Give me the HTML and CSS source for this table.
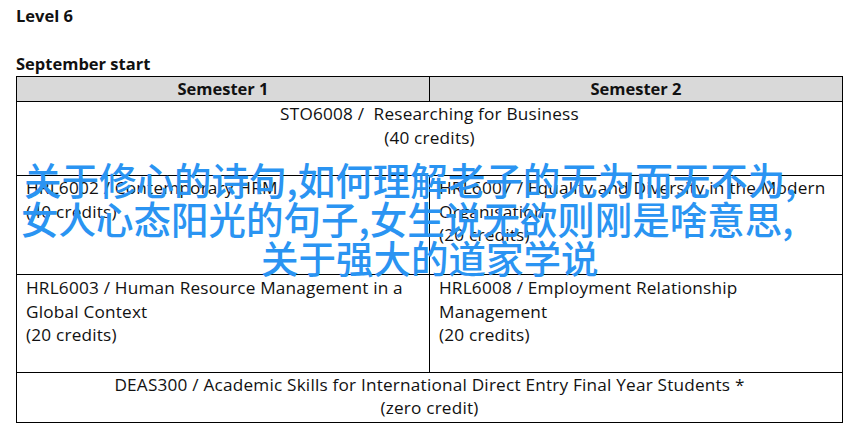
FILE: index.html
```html
<!DOCTYPE html>
<html lang="en">
<head>
<meta charset="utf-8">
<title>Level 6</title>
<link rel="stylesheet" href="styles.css">
</head>
<body>
<div class="page">
  <h1 class="title">Level 6</h1>
  <h2 class="subtitle">September start</h2>
  <div class="plan">
    <div class="cell head">Semester 1</div>
    <div class="cell head">Semester 2</div>
    <div class="cell span center r2">STO6008 /&nbsp; Researching for Business<br>(40 credits)</div>
    <div class="cell r3">HRL6002 / Contemporary HRM<br>(40 credits)</div>
    <div class="cell r3">HRL6007 / Equality and Diversity in the Modern<br>Organisation<br>(20 credits)</div>
    <div class="cell r4">HRL6003 / Human Resource Management in a<br>Global Context<br>(20 credits)</div>
    <div class="cell r4">HRL6008 / Employment Relationship<br>Management<br>(20 credits)</div>
    <div class="cell span center r5">DEAS300 / Academic Skills for International Direct Entry Final Year Students *<br>(zero credit)</div>
  </div>
  <div class="overlay">
    <span class="line l1">关于修心的诗句,如何理解老子的无为而无不为,</span>
    <span class="line l2">女人心态阳光的句子,女生说无欲则刚是啥意思,</span>
    <span class="line l3">关于强大的道家学说</span>
  </div>
</div>
</body>
</html>
```
FILE: styles.css
```css
* { box-sizing: border-box; }
html, body { margin: 0; padding: 0; background: #fff; }
body {
  width: 856px;
  height: 434px;
  overflow: hidden;
  font-family: "Open Sans", "Liberation Sans", sans-serif;
  color: #111;
}
.page {
  position: relative;
  padding-left: 16px;
  padding-top: 4px;
  height: 434px;
}
.title, .subtitle {
  margin: 0;
  font-size: 16.5px;
  font-weight: 700;
  line-height: 24px;
}
.subtitle { margin-top: 24px; }
.plan {
  display: grid;
  width: 827px;
  grid-template-columns: 413px 413px;
  grid-template-rows: 25px 74px 99px 98px 50px;
  border-left: 1px solid #000;
  border-top: 1px solid #000;
  font-size: 17.2px;
  letter-spacing: 0.2px;
  line-height: 23.5px;
}
.cell {
  border-right: 1px solid #000;
  border-bottom: 1px solid #000;
  padding: 0 9px 0 9px;
  white-space: nowrap;
}
.head {
  background: #d9d9d9;
  font-weight: 700;
  font-size: 16.5px;
  letter-spacing: 0;
  text-align: center;
  line-height: 22px;
  padding-top: 1px;
}
.span { grid-column: 1 / 3; }
.center { text-align: center; }
.r4 { padding-top: 1px; }
.r5 { padding-top: 0; line-height: 23px; }
.overlay {
  position: absolute;
  left: 0;
  top: 159px;
  width: 856px;
  font-family: "Noto Sans CJK SC", sans-serif;
  font-weight: 500;
  font-size: 37.5px;
  line-height: 39px;
  color: #2a94f2;
}
.line { display: block; white-space: nowrap; }
.l1 { padding-left: 24px; }
.l2 { padding-left: 21px; }
.l3 { padding-left: 261px; }
```
